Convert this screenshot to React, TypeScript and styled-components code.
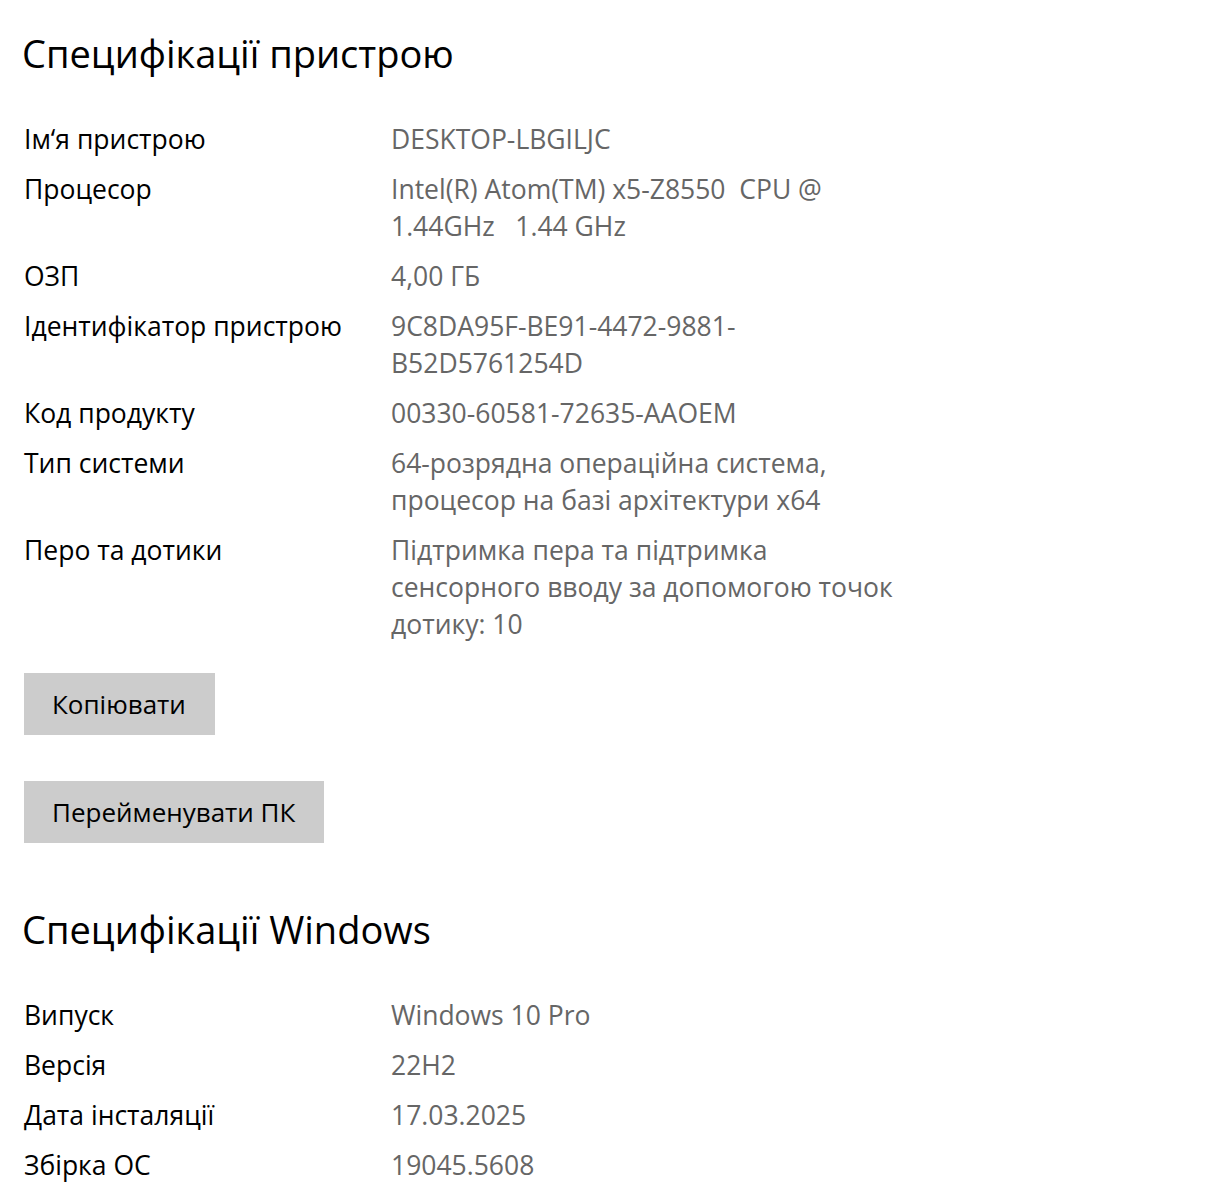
import { createGlobalStyle, styled } from "styled-components";

const GlobalStyle = createGlobalStyle`
    html, body {
        margin: 0;
        padding: 0;
        background: #ffffff;
    }
    body {
        font-family: "Open Sans", "Noto Sans", "Liberation Sans", sans-serif;
        color: #000000;
    }
`;

interface SpecItem {
    label: string;
    lines: string[];
}

const deviceSpecs: SpecItem[] = [
    { label: "Ім‘я пристрою", lines: ["DESKTOP-LBGILJC"] },
    { label: "Процесор", lines: ["Intel(R) Atom(TM) x5-Z8550  CPU @", "1.44GHz   1.44 GHz"] },
    { label: "ОЗП", lines: ["4,00 ГБ"] },
    { label: "Ідентифікатор пристрою", lines: ["9C8DA95F-BE91-4472-9881-", "B52D5761254D"] },
    { label: "Код продукту", lines: ["00330-60581-72635-AAOEM"] },
    { label: "Тип системи", lines: ["64-розрядна операційна система,", "процесор на базі архітектури x64"] },
    { label: "Перо та дотики", lines: ["Підтримка пера та підтримка", "сенсорного вводу за допомогою точок", "дотику: 10"] },
];

const windowsSpecs: SpecItem[] = [
    { label: "Випуск", lines: ["Windows 10 Pro"] },
    { label: "Версія", lines: ["22H2"] },
    { label: "Дата інсталяції", lines: ["17.03.2025"] },
    { label: "Збірка ОС", lines: ["19045.5608"] },
];

const SpecList = ({ items }: { items: SpecItem[] }) => (
    <List>
        {items.map((item) => (
            <Row key={item.label}>
                <Label>{item.label}</Label>
                <Value>
                    {item.lines.map((line) => (
                        <Line key={line}>{line}</Line>
                    ))}
                </Value>
            </Row>
        ))}
    </List>
);

export default function App() {
    return (
        <>
            <GlobalStyle />
            <Page>
                <Heading>Специфікації пристрою</Heading>
                <SpecList items={deviceSpecs} />
                <Buttons>
                    <Button>Копіювати</Button>
                    <Button>Перейменувати ПК</Button>
                </Buttons>
                <Heading $spaced>Специфікації Windows</Heading>
                <SpecList items={windowsSpecs} />
            </Page>
        </>
    );
}

const Page = styled.main`
    display: flex;
    flex-direction: column;
    align-items: flex-start;
    padding: 25px 0 0 24px;
`;

const Heading = styled.h2<{ $spaced?: boolean }>`
    margin: ${(p) => (p.$spaced ? "58px" : "0")} 0 0 -2px;
    font-size: 38px;
    font-weight: 400;
    line-height: 56px;
    color: #000000;
`;

const List = styled.div`
    display: flex;
    flex-direction: column;
    gap: 13px;
    margin-top: 40px;
`;

const Row = styled.div`
    display: grid;
    grid-template-columns: 367px auto;
    font-size: 26.5px;
    line-height: 37px;
`;

const Label = styled.div`
    color: #000000;
`;

const Value = styled.div`
    display: flex;
    flex-direction: column;
    color: #666666;
`;

const Line = styled.span`
    white-space: pre;
`;

const Buttons = styled.div`
    display: flex;
    flex-direction: column;
    align-items: flex-start;
    gap: 46px;
    margin-top: 30px;
`;

const Button = styled.button`
    height: 62px;
    padding: 0 29px 0 28px;
    border: none;
    border-radius: 0;
    background: #cccccc;
    color: #000000;
    font-family: inherit;
    font-size: 26px;
    cursor: pointer;
`;
